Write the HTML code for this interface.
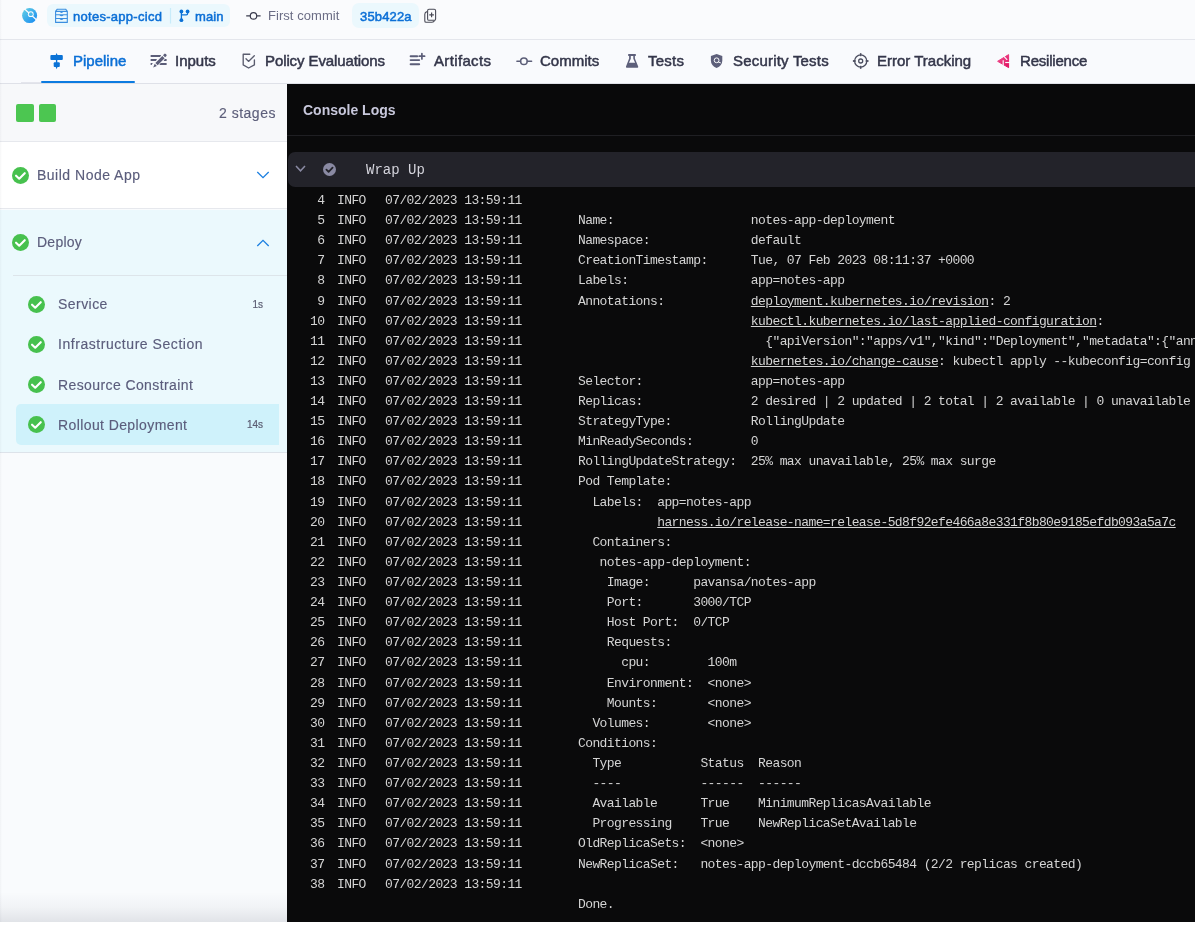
<!DOCTYPE html>
<html><head><meta charset="utf-8">
<style>
*{box-sizing:border-box}
html,body{margin:0;padding:0}
body{width:1195px;height:935px;overflow:hidden;position:relative;background:#ffffff;font-family:"Liberation Sans",sans-serif}
.abs{position:absolute}
#hdr,#tabs,#side,#console{will-change:transform}
svg{display:block}
#hdr{left:0;top:0;width:1195px;height:40px;background:#fafbfd;border-bottom:1px solid #e4e6ec}
#tabs{left:0;top:40px;width:1195px;height:44px;background:#f9fafd;border-bottom:1px solid #dfe1e8}
.t{position:absolute;white-space:nowrap;line-height:1}
.hd{font-size:13px}
.tab{font-size:15px;color:#34364a;-webkit-text-stroke:0.5px #34364a}
#side{left:0;top:84px;width:287px;height:838px;background:#f9fbfd;overflow:hidden}
.sb{position:absolute;white-space:nowrap;line-height:1;font-size:14px;letter-spacing:0.45px;color:#5b5d7c;-webkit-text-stroke:0.15px #5b5d7c}
.dur{position:absolute;white-space:nowrap;line-height:1;font-size:10px;color:#5b5d72;-webkit-text-stroke:0.2px #5b5d72;text-align:right}
#console{left:287px;top:84px;width:908px;height:838px;background:#0a0a0b;overflow:hidden}
.mono{font-family:"Liberation Mono",monospace}
.ln{position:absolute;left:0;height:20px;width:908px;font-family:"Liberation Mono",monospace;font-size:13px;letter-spacing:-0.6px;line-height:20px;color:#d4d4d4;white-space:pre}
.ln span{position:absolute;top:0}
.num{right:870.5px;text-align:right}
.lvl{left:50px}
.dt{left:98px}
.ct{left:291px}
.ln u{text-decoration:underline;text-underline-offset:1px}
</style></head>
<body>
<div id="hdr" class="abs">
  <div class="abs" style="left:47px;top:4px;width:183px;height:23px;border-radius:6px;background:#ebf8fd"></div>
  <div class="abs" style="left:352px;top:3px;width:67px;height:25px;border-radius:7px;background:#ebf8fd"></div>
  <div class="t hd" style="left:73px;top:9.5px;color:#0b6fd6;font-size:13px;letter-spacing:0.28px;-webkit-text-stroke:0.5px #0b6fd6">notes-app-cicd</div>
  <div class="t hd" style="left:195px;top:9.5px;color:#0b6fd6;font-size:13px;letter-spacing:0.1px;-webkit-text-stroke:0.5px #0b6fd6">main</div>
  <div class="t hd" style="left:268px;top:9px;color:#6b6d85;letter-spacing:0.05px">First commit</div>
  <div class="t hd" style="left:360px;top:9.5px;color:#0b6fd6;font-size:13px;letter-spacing:0.15px;-webkit-text-stroke:0.5px #0b6fd6">35b422a</div>
  <svg class="abs" style="left:0;top:0" width="460" height="40" viewBox="0 0 460 40">
    <defs><linearGradient id="lg" x1="22" y1="8" x2="37" y2="23" gradientUnits="userSpaceOnUse"><stop offset="0" stop-color="#66d3e3"/><stop offset="1" stop-color="#1487f3"/></linearGradient></defs>
    <circle cx="29.6" cy="15.6" r="7.5" fill="url(#lg)"/>
    <line x1="24" y1="8.5" x2="37.5" y2="20.8" stroke="#fafbfd" stroke-width="1.2"/>
    <circle cx="30.8" cy="14.2" r="2.9" fill="#fafbfd"/>
    <circle cx="30.8" cy="14.2" r="1.9" fill="#49b9ec"/>
    <!-- repo icon -->
    <g fill="none" stroke="#3b8ee0" stroke-width="1.1" stroke-linejoin="round">
      <path d="M55.6 11.4 L57.3 9.2 H65.6 L67.3 11.4 V22.4 H55.6 Z"/>
      <path d="M55.6 11.4 H67.3 M55.6 14.8 H67.3 M55.6 18.5 H67.3"/>
    </g>
    <g fill="#3b8ee0">
      <path d="M59.3 11.6 Q61.5 14.2 63.7 11.6 Z"/>
      <path d="M59.3 15.1 Q61.5 17.5 63.7 15.1 Z"/>
      <path d="M59.3 18.8 Q61.5 21.2 63.7 18.8 Z"/>
    </g>
    <!-- divider -->
    <rect x="169.9" y="8" width="1.2" height="15.5" fill="#c8ecfa"/>
    <!-- branch -->
    <g fill="#0c72d6">
      <circle cx="181.4" cy="11.4" r="1.9"/><circle cx="187.6" cy="11.4" r="1.9"/><circle cx="181.4" cy="20.2" r="1.9"/>
    </g>
    <path d="M181.4 11.4 V20.2 M181.4 14.9 H186.4 Q187.6 14.9 187.6 13.6 V11.4" fill="none" stroke="#0c72d6" stroke-width="1.3"/>
    <!-- commit -->
    <g fill="none" stroke="#3a3c4e" stroke-width="1.2">
      <circle cx="253.5" cy="15.9" r="3.2"/>
      <path d="M246.2 15.9 H250.3 M256.7 15.9 H260.6"/>
    </g>
    <!-- copy -->
    <g fill="none" stroke="#4a4b57" stroke-width="1.1" stroke-linejoin="round">
      <path d="M426.9 11.6 Q424.8 12.2 424.8 14.2 V21 Q424.8 22.3 426.1 22.3 H432 Q433.8 22.3 434.6 20.6"/>
      <rect x="427.6" y="9.3" width="8" height="11" rx="1.4"/>
    </g>
    <path d="M431.6 12.6 V17.2 M429.3 14.9 H433.9" stroke="#4a4b57" stroke-width="1.2"/>
  </svg>
</div>
<div id="tabs" class="abs">
  <div class="t tab" style="left:73px;top:13px;color:#0b6fd6;-webkit-text-stroke:0.5px #0b6fd6">Pipeline</div>
  <div class="abs" style="left:21px;top:42px;width:20px;height:1px;background:#e4e5ec"></div>
  <div class="abs" style="left:41px;top:41px;width:94px;height:2px;border-radius:1px;background:#0c7be0"></div>
  <div class="t tab" style="left:175px;top:13px">Inputs</div>
  <div class="t tab" style="left:265px;top:13px;letter-spacing:-0.1px">Policy Evaluations</div>
  <div class="t tab" style="left:434px;top:13px;letter-spacing:0.35px">Artifacts</div>
  <div class="t tab" style="left:540px;top:13px">Commits</div>
  <div class="t tab" style="left:648px;top:13px;letter-spacing:0.25px">Tests</div>
  <div class="t tab" style="left:733px;top:13px;letter-spacing:0.2px">Security Tests</div>
  <div class="t tab" style="left:877px;top:13px">Error Tracking</div>
  <div class="t tab" style="left:1020px;top:13px;letter-spacing:-0.2px">Resilience</div>
  <svg class="abs" style="left:0;top:-40px" width="1195" height="84" viewBox="0 0 1195 84">
    <!-- pipeline -->
    <g fill="#0b72d6">
      <rect x="50.4" y="55" width="12.4" height="5" rx="1"/>
      <rect x="53.7" y="62.2" width="6.1" height="4.9" rx="1"/>
      <path d="M55.9 54.5 L56.6 53 L57.3 54.5 V67.5 L56.6 69.2 L55.9 67.5 Z"/>
    </g>
    <!-- inputs -->
    <g fill="#5b5d78">
      <path d="M150.6 55.1 H161.2 L160.1 56.9 H150.6 Z"/>
      <path d="M150.6 59.1 H157 L155.9 60.9 H150.6 Z"/>
      <path d="M150.6 63.1 H152.8 L151.6 64.9 H150.6 Z"/>
      <path d="M160.6 63.1 H166.6 V64.9 H159.4 Z"/>
      <path d="M164.8 59.1 H166.6 V60.9 H163.6 Z"/>
      <path d="M155.4 62.9 L162.3 56 L164.6 58.3 L157.7 65.2 Z"/>
      <path d="M154.7 63.7 L156.9 65.9 L153.2 67.6 Z"/>
      <path d="M163 55.2 L164.8 53.5 Q166.7 53.8 166.7 55.7 L165.1 57.3 Z"/>
    </g>
    <!-- policy -->
    <g fill="none" stroke="#5a5c6e" stroke-width="1.35" stroke-linecap="round" stroke-linejoin="round">
      <path d="M249.8 54.2 H243.2 V64.9 L248.6 68 L254.4 64.9 V60"/>
      <path d="M246 58.8 L248.5 61.4 L254.3 55.8"/>
    </g>
    <!-- artifacts -->
    <g stroke="#5b5d78" stroke-width="1.9" stroke-linecap="round" fill="none">
      <path d="M410.6 56.2 H417.2 M410.6 60.1 H419.2 M410.6 64.2 H419.2"/>
      <path d="M421.9 53.5 V58.9 M419.2 56.2 H424.6" stroke-width="1.7"/>
    </g>
    <!-- commits -->
    <g fill="none" stroke="#5c5e78" stroke-width="1.5">
      <circle cx="523.9" cy="61.2" r="3.3"/>
      <path d="M516.9 61.2 H520.6 M527.2 61.2 H531.6" stroke-linecap="round"/>
    </g>
    <!-- tests -->
    <path fill="#5d5f7a" fill-rule="evenodd" d="M628.2 54 H635.8 V55.9 H634.9 V58.5 L638.2 66.6 Q638.5 67.8 637.3 67.8 H626.9 Q625.7 67.8 626 66.6 L629.1 58.5 V55.9 H628.2 Z M630.8 56 V58.8 L629 62.8 H635.1 L633.3 58.8 V56 Z"/>
    <!-- security -->
    <path fill="#5d5f7a" d="M716.6 54.1 L722.3 56.1 V60.5 Q722.3 65.5 716.6 68.1 Q710.9 65.5 710.9 60.5 V56.1 Z"/>
    <circle cx="716.6" cy="60.3" r="2.4" fill="none" stroke="#fafbfd" stroke-width="1"/>
    <path d="M718.3 62 L720.8 62.9" stroke="#fafbfd" stroke-width="1"/>
    <!-- error tracking -->
    <g fill="none" stroke="#4c4e60" stroke-width="1.3">
      <circle cx="860.7" cy="61" r="6.1"/>
      <circle cx="860.7" cy="61" r="2"/>
    </g>
    <g fill="#4c4e60">
      <path d="M859.8 53.5 L860.7 53 L861.6 53.5 L861.2 56.3 H860.2 Z"/>
      <path d="M859.8 68.5 L860.7 69 L861.6 68.5 L861.2 65.7 H860.2 Z"/>
      <path d="M853.2 60.1 L852.7 61 L853.2 61.9 L856 61.5 V60.5 Z"/>
      <path d="M868.2 60.1 L868.7 61 L868.2 61.9 L865.4 61.5 V60.5 Z"/>
    </g>
    <!-- resilience -->
    <defs><linearGradient id="rg" x1="997" y1="54" x2="1009" y2="68" gradientUnits="userSpaceOnUse"><stop offset="0" stop-color="#f25a97"/><stop offset="1" stop-color="#df0a5c"/></linearGradient></defs>
    <path fill="url(#rg)" stroke="url(#rg)" stroke-width="1" stroke-linejoin="round" d="M997.6 61.3 L1008.6 54.6 V67.6 Z"/>
    <g stroke="#fafbfd" stroke-width="1.15" stroke-linecap="butt">
      <path d="M1004 56.4 L1007.2 59.9"/>
      <path d="M1003.2 60.3 V65.5"/>
      <path d="M1005.2 62.5 H1010"/>
    </g>
  </svg>
</div>
<div id="side" class="abs">
  <!-- stages header -->
  <div class="abs" style="left:0;top:0;width:287px;height:58px;background:#f7f8fa;border-bottom:1px solid #e6e8ed"></div>
  <div class="abs" style="left:16px;top:20px;width:18px;height:18px;border-radius:2px;background:#4cc651"></div>
  <div class="abs" style="left:38.7px;top:20px;width:17.4px;height:18px;border-radius:2px;background:#4cc651"></div>
  <div class="sb" style="left:219px;top:22px;letter-spacing:0.5px;color:#5d5f7a">2 stages</div>
  <!-- build node app -->
  <div class="abs" style="left:0;top:58px;width:287px;height:67px;background:#ffffff;border-bottom:1px solid #e6e8ed"></div>
  <svg class="abs" style="left:12px;top:83px" width="17" height="17" viewBox="0 0 16 16"><circle cx="8" cy="8" r="8" fill="#47c14e"/><polyline points="3.8,8.2 6.8,11 12,5.8" fill="none" stroke="#fff" stroke-width="2" stroke-linecap="round" stroke-linejoin="round"/></svg>
  <div class="sb" style="left:37px;top:84px;letter-spacing:0.5px">Build Node App</div>
  <svg class="abs" style="left:256px;top:87px" width="14" height="8" viewBox="0 0 14 8"><polyline points="1.3,1 7,6.7 12.7,1" fill="none" stroke="#1b7fe0" stroke-width="1.3"/></svg>
  <!-- deploy -->
  <div class="abs" style="left:0;top:126px;width:287px;height:243px;background:#ebf9fd;border-bottom:1px solid #dde3ea"></div>
  <svg class="abs" style="left:12px;top:150px" width="17" height="17" viewBox="0 0 16 16"><circle cx="8" cy="8" r="8" fill="#47c14e"/><polyline points="3.8,8.2 6.8,11 12,5.8" fill="none" stroke="#fff" stroke-width="2" stroke-linecap="round" stroke-linejoin="round"/></svg>
  <div class="sb" style="left:37px;top:151px;letter-spacing:0.25px">Deploy</div>
  <svg class="abs" style="left:256px;top:155px" width="14" height="8" viewBox="0 0 14 8"><polyline points="1.3,7 7,1.3 12.7,7" fill="none" stroke="#1b7fe0" stroke-width="1.3"/></svg>
  <div class="abs" style="left:13px;top:191px;width:274px;height:1px;background:#dde5ea"></div>
  <!-- steps -->
  <div class="abs" style="left:16px;top:320px;width:263px;height:41px;border-radius:5px 0 0 5px;background:#cff2fb"></div>
  <svg class="abs" style="left:28px;top:212px" width="17" height="17" viewBox="0 0 16 16"><circle cx="8" cy="8" r="8" fill="#47c14e"/><polyline points="3.8,8.2 6.8,11 12,5.8" fill="none" stroke="#fff" stroke-width="2" stroke-linecap="round" stroke-linejoin="round"/></svg>
  <div class="sb" style="left:58px;top:213px">Service</div>
  <div class="dur" style="left:233px;width:30px;top:216px">1s</div>
  <svg class="abs" style="left:28px;top:252px" width="17" height="17" viewBox="0 0 16 16"><circle cx="8" cy="8" r="8" fill="#47c14e"/><polyline points="3.8,8.2 6.8,11 12,5.8" fill="none" stroke="#fff" stroke-width="2" stroke-linecap="round" stroke-linejoin="round"/></svg>
  <div class="sb" style="left:58px;top:253px;letter-spacing:0.55px">Infrastructure Section</div>
  <svg class="abs" style="left:28px;top:292px" width="17" height="17" viewBox="0 0 16 16"><circle cx="8" cy="8" r="8" fill="#47c14e"/><polyline points="3.8,8.2 6.8,11 12,5.8" fill="none" stroke="#fff" stroke-width="2" stroke-linecap="round" stroke-linejoin="round"/></svg>
  <div class="sb" style="left:58px;top:294px;letter-spacing:0.4px">Resource Constraint</div>
  <svg class="abs" style="left:28px;top:332px" width="17" height="17" viewBox="0 0 16 16"><circle cx="8" cy="8" r="8" fill="#47c14e"/><polyline points="3.8,8.2 6.8,11 12,5.8" fill="none" stroke="#fff" stroke-width="2" stroke-linecap="round" stroke-linejoin="round"/></svg>
  <div class="sb" style="left:58px;top:334px;letter-spacing:0.4px">Rollout Deployment</div>
  <div class="dur" style="left:233px;width:30px;top:336px">14s</div>
  <div class="abs" style="left:0;top:808px;width:287px;height:30px;background:linear-gradient(to bottom, rgba(30,35,60,0) 0%, rgba(30,35,60,0.035) 50%, rgba(30,35,60,0.11) 100%)"></div>
  <div class="abs" style="left:0;top:0;width:2px;height:838px;background:linear-gradient(to right, rgba(30,35,60,0.04), rgba(30,35,60,0))"></div>
</div>
<div id="console" class="abs">
  <div class="abs" style="left:0;top:0;width:908px;height:52px;background:#09090a;border-bottom:1px solid #1f1f23"></div>
  <div class="t" style="left:16px;top:19px;font-size:14px;font-weight:bold;color:#c8c8dc">Console Logs</div>
  <div class="abs" style="left:1px;top:68px;width:920px;height:35px;border-radius:7px;background:#23232a"></div>
  <svg class="abs" style="left:8px;top:81px" width="11" height="7" viewBox="0 0 11 7"><polyline points="1,1 5.5,5.8 10,1" fill="none" stroke="#8a8aa3" stroke-width="1.5"/></svg>
  <svg class="abs" style="left:36px;top:79px" width="13" height="13" viewBox="0 0 16 16"><circle cx="8" cy="8" r="8" fill="#8a8aa3"/><polyline points="4.2,8.2 6.9,10.8 11.8,5.8" fill="none" stroke="#23232a" stroke-width="2.2" stroke-linecap="round" stroke-linejoin="round"/></svg>
  <div class="t mono" style="left:79px;top:79px;font-size:14px;color:#d4d4dc">Wrap Up</div>
<div class="ln" style="top:107.00px"><span class="num">4</span><span class="lvl">INFO</span><span class="dt">07/02/2023 13:59:11</span><span class="ct"></span></div>
<div class="ln" style="top:127.11px"><span class="num">5</span><span class="lvl">INFO</span><span class="dt">07/02/2023 13:59:11</span><span class="ct">Name:                   notes-app-deployment</span></div>
<div class="ln" style="top:147.21px"><span class="num">6</span><span class="lvl">INFO</span><span class="dt">07/02/2023 13:59:11</span><span class="ct">Namespace:              default</span></div>
<div class="ln" style="top:167.32px"><span class="num">7</span><span class="lvl">INFO</span><span class="dt">07/02/2023 13:59:11</span><span class="ct">CreationTimestamp:      Tue, 07 Feb 2023 08:11:37 +0000</span></div>
<div class="ln" style="top:187.42px"><span class="num">8</span><span class="lvl">INFO</span><span class="dt">07/02/2023 13:59:11</span><span class="ct">Labels:                 app=notes-app</span></div>
<div class="ln" style="top:207.53px"><span class="num">9</span><span class="lvl">INFO</span><span class="dt">07/02/2023 13:59:11</span><span class="ct">Annotations:            <u>deployment.kubernetes.io/revision</u>: 2</span></div>
<div class="ln" style="top:227.64px"><span class="num">10</span><span class="lvl">INFO</span><span class="dt">07/02/2023 13:59:11</span><span class="ct">                        <u>kubectl.kubernetes.io/last-applied-configuration</u>:</span></div>
<div class="ln" style="top:247.74px"><span class="num">11</span><span class="lvl">INFO</span><span class="dt">07/02/2023 13:59:11</span><span class="ct">                          {&quot;apiVersion&quot;:&quot;apps/v1&quot;,&quot;kind&quot;:&quot;Deployment&quot;,&quot;metadata&quot;:{&quot;annotations&quot;:{}}}</span></div>
<div class="ln" style="top:267.85px"><span class="num">12</span><span class="lvl">INFO</span><span class="dt">07/02/2023 13:59:11</span><span class="ct">                        <u>kubernetes.io/change-cause</u>: kubectl apply --kubeconfig=config --filename=manifests.yaml</span></div>
<div class="ln" style="top:287.95px"><span class="num">13</span><span class="lvl">INFO</span><span class="dt">07/02/2023 13:59:11</span><span class="ct">Selector:               app=notes-app</span></div>
<div class="ln" style="top:308.06px"><span class="num">14</span><span class="lvl">INFO</span><span class="dt">07/02/2023 13:59:11</span><span class="ct">Replicas:               2 desired | 2 updated | 2 total | 2 available | 0 unavailable</span></div>
<div class="ln" style="top:328.17px"><span class="num">15</span><span class="lvl">INFO</span><span class="dt">07/02/2023 13:59:11</span><span class="ct">StrategyType:           RollingUpdate</span></div>
<div class="ln" style="top:348.27px"><span class="num">16</span><span class="lvl">INFO</span><span class="dt">07/02/2023 13:59:11</span><span class="ct">MinReadySeconds:        0</span></div>
<div class="ln" style="top:368.38px"><span class="num">17</span><span class="lvl">INFO</span><span class="dt">07/02/2023 13:59:11</span><span class="ct">RollingUpdateStrategy:  25% max unavailable, 25% max surge</span></div>
<div class="ln" style="top:388.48px"><span class="num">18</span><span class="lvl">INFO</span><span class="dt">07/02/2023 13:59:11</span><span class="ct">Pod Template:</span></div>
<div class="ln" style="top:408.59px"><span class="num">19</span><span class="lvl">INFO</span><span class="dt">07/02/2023 13:59:11</span><span class="ct">  Labels:  app=notes-app</span></div>
<div class="ln" style="top:428.70px"><span class="num">20</span><span class="lvl">INFO</span><span class="dt">07/02/2023 13:59:11</span><span class="ct">           <u>harness.io/release-name=release-5d8f92efe466a8e331f8b80e9185efdb093a5a7c</u></span></div>
<div class="ln" style="top:448.80px"><span class="num">21</span><span class="lvl">INFO</span><span class="dt">07/02/2023 13:59:11</span><span class="ct">  Containers:</span></div>
<div class="ln" style="top:468.91px"><span class="num">22</span><span class="lvl">INFO</span><span class="dt">07/02/2023 13:59:11</span><span class="ct">   notes-app-deployment:</span></div>
<div class="ln" style="top:489.01px"><span class="num">23</span><span class="lvl">INFO</span><span class="dt">07/02/2023 13:59:11</span><span class="ct">    Image:      pavansa/notes-app</span></div>
<div class="ln" style="top:509.12px"><span class="num">24</span><span class="lvl">INFO</span><span class="dt">07/02/2023 13:59:11</span><span class="ct">    Port:       3000/TCP</span></div>
<div class="ln" style="top:529.23px"><span class="num">25</span><span class="lvl">INFO</span><span class="dt">07/02/2023 13:59:11</span><span class="ct">    Host Port:  0/TCP</span></div>
<div class="ln" style="top:549.33px"><span class="num">26</span><span class="lvl">INFO</span><span class="dt">07/02/2023 13:59:11</span><span class="ct">    Requests:</span></div>
<div class="ln" style="top:569.44px"><span class="num">27</span><span class="lvl">INFO</span><span class="dt">07/02/2023 13:59:11</span><span class="ct">      cpu:        100m</span></div>
<div class="ln" style="top:589.54px"><span class="num">28</span><span class="lvl">INFO</span><span class="dt">07/02/2023 13:59:11</span><span class="ct">    Environment:  &lt;none&gt;</span></div>
<div class="ln" style="top:609.65px"><span class="num">29</span><span class="lvl">INFO</span><span class="dt">07/02/2023 13:59:11</span><span class="ct">    Mounts:       &lt;none&gt;</span></div>
<div class="ln" style="top:629.76px"><span class="num">30</span><span class="lvl">INFO</span><span class="dt">07/02/2023 13:59:11</span><span class="ct">  Volumes:        &lt;none&gt;</span></div>
<div class="ln" style="top:649.86px"><span class="num">31</span><span class="lvl">INFO</span><span class="dt">07/02/2023 13:59:11</span><span class="ct">Conditions:</span></div>
<div class="ln" style="top:669.97px"><span class="num">32</span><span class="lvl">INFO</span><span class="dt">07/02/2023 13:59:11</span><span class="ct">  Type           Status  Reason</span></div>
<div class="ln" style="top:690.07px"><span class="num">33</span><span class="lvl">INFO</span><span class="dt">07/02/2023 13:59:11</span><span class="ct">  ----           ------  ------</span></div>
<div class="ln" style="top:710.18px"><span class="num">34</span><span class="lvl">INFO</span><span class="dt">07/02/2023 13:59:11</span><span class="ct">  Available      True    MinimumReplicasAvailable</span></div>
<div class="ln" style="top:730.29px"><span class="num">35</span><span class="lvl">INFO</span><span class="dt">07/02/2023 13:59:11</span><span class="ct">  Progressing    True    NewReplicaSetAvailable</span></div>
<div class="ln" style="top:750.39px"><span class="num">36</span><span class="lvl">INFO</span><span class="dt">07/02/2023 13:59:11</span><span class="ct">OldReplicaSets:  &lt;none&gt;</span></div>
<div class="ln" style="top:770.50px"><span class="num">37</span><span class="lvl">INFO</span><span class="dt">07/02/2023 13:59:11</span><span class="ct">NewReplicaSet:   notes-app-deployment-dccb65484 (2/2 replicas created)</span></div>
<div class="ln" style="top:790.60px"><span class="num">38</span><span class="lvl">INFO</span><span class="dt">07/02/2023 13:59:11</span><span class="ct"></span></div>
<div class="ln" style="top:810.71px"><span class="ct">Done.</span></div>
</div>
<div class="abs" style="left:0;top:922px;width:1195px;height:13px;background:#ffffff"></div>
<div class="abs" style="left:0;top:0;width:2px;height:84px;background:linear-gradient(to right, rgba(30,35,60,0.035), rgba(30,35,60,0))"></div>
</body></html>
